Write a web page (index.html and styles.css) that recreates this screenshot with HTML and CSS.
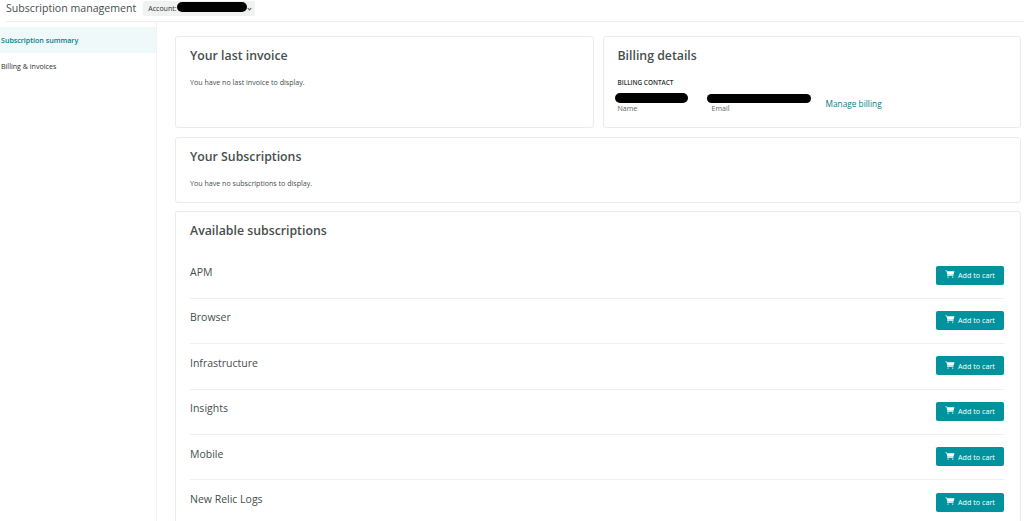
FILE: index.html
```html
<!DOCTYPE html>
<html lang="en">
<head>
<meta charset="utf-8">
<title>Subscription management</title>
<link rel="stylesheet" href="styles.css">
</head>
<body>
<svg class="sprite" width="0" height="0"><defs><symbol id="cart" viewBox="0 0 12 10"><path d="M0 .4h1.7l.5 1.2h9.4l-1.3 4.2H3.6l-.2.9h7v.7H2.5l.4-1.9L1.2 1H0z" fill="#fff"/><circle cx="3.6" cy="8.9" r=".9" fill="#fff"/><circle cx="9.4" cy="8.9" r=".9" fill="#fff"/></symbol></defs></svg>
<header class="topbar">
  <h1 class="page-title">Subscription management</h1>
  <div class="account">Account:<span class="scribble scribble-account"></span><span class="chevron"></span></div>
</header>
<div class="layout">
  <nav class="sidebar">
    <a class="nav-item active">Subscription summary</a>
    <a class="nav-item">Billing &amp; invoices</a>
  </nav>
  <main class="main">
    <div class="row-two">
      <section class="card card-top">
        <h2>Your last invoice</h2>
        <p class="note">You have no last invoice to display.</p>
      </section>
      <section class="card card-top">
        <h2>Billing details</h2>
        <div class="label">BILLING CONTACT</div>
        <div class="contact">
          <div class="field field-name"><span class="scribble scribble-name"></span>Name</div>
          <div class="field field-email"><span class="scribble scribble-email"></span>Email</div>
          <a class="manage">Manage billing</a>
        </div>
      </section>
    </div>
    <section class="card card-subs">
      <h2>Your Subscriptions</h2>
      <p class="note">You have no subscriptions to display.</p>
    </section>
    <section class="card card-available">
      <h2>Available subscriptions</h2>
      <ul class="products">
        <li class="product"><span>APM</span><button class="add"><svg class="cart"><use href="#cart"/></svg>Add to cart</button></li>
        <li class="product"><span>Browser</span><button class="add"><svg class="cart"><use href="#cart"/></svg>Add to cart</button></li>
        <li class="product"><span>Infrastructure</span><button class="add"><svg class="cart"><use href="#cart"/></svg>Add to cart</button></li>
        <li class="product"><span>Insights</span><button class="add"><svg class="cart"><use href="#cart"/></svg>Add to cart</button></li>
        <li class="product"><span>Mobile</span><button class="add"><svg class="cart"><use href="#cart"/></svg>Add to cart</button></li>
        <li class="product"><span>New Relic Logs</span><button class="add"><svg class="cart"><use href="#cart"/></svg>Add to cart</button></li>
      </ul>
    </section>
  </main>
</div>
</body>
</html>
```
FILE: styles.css
```css
* { box-sizing: border-box; }
html, body { margin: 0; height: 521px; overflow: hidden; background: #fff; }
body { font-family: "Open Sans", sans-serif; color: #464e4e; }
.sprite { position: absolute; }
.topbar { display: flex; align-items: center; height: 22px; margin-left: 6px; padding-bottom: 5px; border-bottom: 1px solid #eef0f0; }
.page-title { margin: 0; font-size: 10.6px; font-weight: 400; line-height: 17px; color: #464e4e; }
.account { position: relative; display: flex; align-items: center; width: 112px; height: 15px; margin-left: 7px; padding-left: 5px; background: #f0f2f2; border-radius: 2px; font-size: 7px; color: #2a3030; }
.scribble { position: absolute; background: #000; border-radius: 6px; }
.scribble-account { left: 34px; top: 1px; width: 70px; height: 10px; }
.chevron { position: absolute; left: 105px; top: 6px; width: 3px; height: 3px; border-right: 1px solid #555; border-bottom: 1px solid #555; transform: rotate(45deg); }
.layout { display: flex; height: 499px; }
.sidebar { width: 157px; padding-top: 5px; border-right: 1px solid #f1f3f3; font-size: 7.1px; }
.nav-item { display: flex; align-items: center; height: 26px; padding-left: 1px; color: #2a3030; }
.nav-item.active { background: #eff9fa; color: #007e8a; font-weight: 600; }
.main { flex: 1; min-width: 0; display: flex; flex-direction: column; gap: 9px; padding: 14px 3px 0 18px; }
.row-two { display: flex; gap: 9px; }
.card { position: relative; background: #fff; border: 1px solid #e9ecec; border-radius: 3px; padding: 10px 14px 0; flex: none; }
.card-top { flex: 1; height: 92px; }
.card h2 { margin: 0; font-size: 12.3px; line-height: 17px; font-weight: 600; color: #464e4e; }
.note { margin: 13px 0 0; font-size: 7.1px; line-height: 11px; color: #464e4e; }
.label { margin-top: 14px; font-size: 6.4px; line-height: 9px; font-weight: 600; color: #2a3030; }
.contact { display: flex; align-items: flex-start; margin-top: 7px; font-size: 7.1px; }
.field { position: relative; padding-top: 9px; line-height: 10px; color: #5a6262; }
.field-name { width: 94px; }
.field-email { width: 114px; }
.scribble-name { left: -3px; top: -1px; width: 73px; height: 10px; }
.scribble-email { left: -5px; top: 0; width: 104px; height: 9px; }
.manage { margin-top: 4px; font-size: 8.3px; line-height: 12px; color: #007e8a; }
.card-subs { height: 66px; padding-top: 10px; }
.card-subs .note { margin-top: 13px; }
.card-available { flex: 1; margin-top: -1px; padding-right: 16px; padding-top: 10px; border-bottom: 0; }
.products { list-style: none; margin: 14.4px 0 0; padding: 0; }
.product { display: flex; justify-content: space-between; align-items: center; height: 45.4px; border-bottom: 1px solid #eef0f0; font-size: 10.5px; color: #464e4e; }
.product span { margin-top: -7px; }
.add { display: flex; align-items: center; width: 68px; height: 19px; padding: 0 0 0 9px; margin-top: -1px; background: #00939e; border: 0; border-radius: 2px; font: 400 7.2px "Open Sans", sans-serif; color: #fff; }
.cart { width: 10px; height: 8px; margin-right: 3px; margin-top: -2px; }
```
